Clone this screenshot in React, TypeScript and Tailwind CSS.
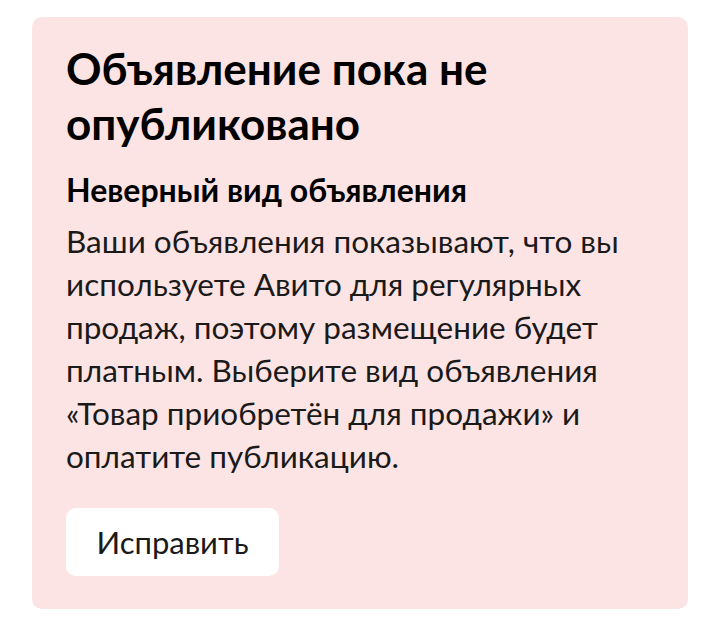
import React from "react";

const App = () => {
  return (
    <div className="min-h-[639px] w-[720px] bg-white pt-[17px] px-8 font-['Lato','Noto_Sans',sans-serif] text-black">
      <div className="rounded-[10px] bg-[#fde4e4] pl-[34px] pr-8 pt-[24px] pb-[33px]">
        <h1 className="text-[44px] font-bold leading-[55px]">
          Объявление пока не
          <br />
          опубликовано
        </h1>
        <h2 className="mt-[19px] text-[32px] font-bold leading-[40px]">
          Неверный вид объявления
        </h2>
        <p className="mt-[10px] text-[31.5px] leading-[43px] text-[#1a1a1a]">
          Ваши объявления показывают, что вы используете Авито для регулярных
          продаж, поэтому размещение будет платным. Выберите вид объявления
          «Товар приобретён для продажи» и оплатите публикацию.
        </p>
        <button className="mt-[30px] h-[68px] w-[213px] rounded-[10px] bg-white text-[31px] text-[#1a1a1a]">
          Исправить
        </button>
      </div>
    </div>
  );
};

export default App;
